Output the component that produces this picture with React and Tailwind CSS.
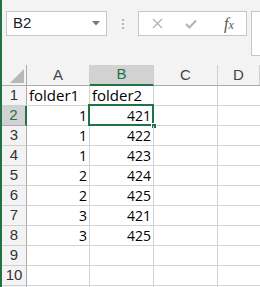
import React from 'react';

const rows = [
  ['folder1', 'folder2'],
  ['1', '421'],
  ['1', '422'],
  ['1', '423'],
  ['2', '424'],
  ['2', '425'],
  ['3', '421'],
  ['3', '425'],
  ['', ''],
  ['', ''],
];

const uiFont = { fontFamily: '"Liberation Sans", Arial, sans-serif' };
const cellFont = { fontFamily: '"Open Sans", "Liberation Sans", sans-serif' };

function FormulaBar() {
  return (
    <div className="h-[65px] flex items-start pt-[11px] bg-[#f3f3f3] shrink-0">
      {/* Name box */}
      <div className="ml-[4px] w-[101px] h-[25px] bg-white border border-[#c6c6c6] flex items-center justify-between pl-[6px] pr-[6px]">
        <span className="text-[15px] text-[#222]">B2</span>
        <svg width="8" height="5" viewBox="0 0 8 5">
          <path d="M0 0 L8 0 L4 4.5 Z" fill="#7a7a7a" />
        </svg>
      </div>
      {/* Dots */}
      <div className="w-[31px] h-[25px] flex flex-col items-center justify-center gap-[2px]">
        <span className="w-[2px] h-[2px] bg-[#b5b5b5]" />
        <span className="w-[2px] h-[2px] bg-[#b5b5b5]" />
        <span className="w-[2px] h-[2px] bg-[#b5b5b5]" />
      </div>
      {/* Buttons */}
      <div className="w-[109px] h-[25px] bg-white border border-[#c6c6c6] flex items-center">
        <svg className="ml-[13px]" width="11" height="11" viewBox="0 0 11 11">
          <path d="M1 1 L10 10 M10 1 L1 10" stroke="#b4b4b4" strokeWidth="1.4" />
        </svg>
        <svg className="ml-[22px]" width="12" height="10" viewBox="0 0 12 10">
          <path d="M1 5 L4.5 8.5 L11 1.5" stroke="#b4b4b4" strokeWidth="2" fill="none" />
        </svg>
        <span
          className="ml-[27px] text-[16px] italic text-[#555] leading-none"
          style={{ fontFamily: '"Liberation Serif", "Times New Roman", serif' }}
        >
          f<span className="text-[12px]">x</span>
        </span>
      </div>
      {/* Formula input */}
      <div className="ml-[4px] flex-1 h-[45px] bg-white border border-[#c6c6c6] border-r-0" />
    </div>
  );
}

export default function App() {
  const cols = ['A', 'B', 'C', 'D'];
  const widths = ['w-[63px]', 'w-[64px]', 'w-[64px]', 'flex-1'];

  return (
    <div className="w-[260px] h-[287px] overflow-hidden bg-white border-l-2 border-[#217346] flex flex-col" style={uiFont}>
      <FormulaBar />

      {/* Column headers */}
      <div className="flex h-[21px] bg-[#f3f3f3] border-b border-[#ababab] shrink-0">
        <div className="w-[25px] border-r border-[#ababab] relative shrink-0">
          <svg className="absolute right-[2px] bottom-[2px]" width="14" height="14" viewBox="0 0 14 14">
            <path d="M14 0 L14 14 L0 14 Z" fill="#b8b8b8" />
          </svg>
        </div>
        {cols.map((c, i) => (
          <div
            key={c}
            className={`${widths[i]} shrink-0 flex items-center justify-center text-[15px] border-r border-[#d0d0d0] ${
              c === 'B' ? 'bg-[#d2d2d2] text-[#217346] border-b-2 border-b-[#217346] -mb-px' : 'text-[#444]'
            }`}
          >
            {c}
          </div>
        ))}
      </div>

      {/* Rows */}
      {rows.map((r, idx) => {
        const n = idx + 1;
        const sel = n === 2;
        const isText = idx === 0;
        return (
          <div key={n} className="flex h-[20px] shrink-0">
            <div
              className={`w-[25px] shrink-0 flex items-center justify-center text-[15px] border-b ${
                sel
                  ? 'bg-[#d2d2d2] text-[#217346] border-r-2 border-r-[#217346] border-b-[#ababab]'
                  : 'bg-[#f3f3f3] text-[#333] border-r border-r-[#ababab] border-b-[#d0d0d0]'
              }`}
            >
              {n}
            </div>
            <div
              className={`w-[63px] shrink-0 flex items-center px-[2px] text-black border-r border-b border-[#d4d4d4] ${
                isText ? 'justify-start text-[15px]' : 'justify-end text-[14px]'
              }`}
              style={cellFont}
            >
              {r[0]}
            </div>
            <div
              className={`w-[64px] shrink-0 flex items-center px-[2px] text-black border-r border-b border-[#d4d4d4] relative ${
                isText ? 'justify-start text-[15px]' : 'justify-end text-[14px]'
              }`}
              style={cellFont}
            >
              {r[1]}
              {sel && (
                <>
                  <div className="absolute -left-[2px] -top-[2px] right-[-1px] bottom-[-1px] border-2 border-[#217346]" />
                  <div className="absolute right-[-4px] bottom-[-4px] w-[6px] h-[6px] bg-[#217346] border border-white" />
                </>
              )}
            </div>
            <div className="w-[64px] shrink-0 border-r border-b border-[#d4d4d4]" />
            <div className="flex-1 border-b border-[#d4d4d4]" />
          </div>
        );
      })}
      <div className="flex flex-1">
        <div className="w-[25px] shrink-0 bg-[#f3f3f3] border-r border-[#ababab]" />
        <div className="w-[63px] shrink-0 border-r border-[#d4d4d4]" />
        <div className="w-[64px] shrink-0 border-r border-[#d4d4d4]" />
        <div className="w-[64px] shrink-0 border-r border-[#d4d4d4]" />
      </div>
    </div>
  );
}
